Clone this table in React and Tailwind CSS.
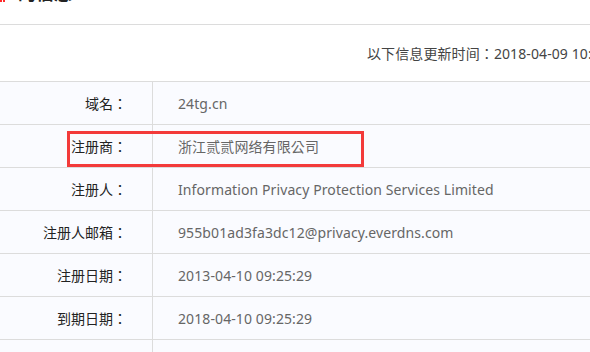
export default function App() {
  const rows = [
    ["域名：", "24tg.cn"],
    ["注册商：", "浙江贰贰网络有限公司"],
    ["注册人：", "Information Privacy Protection Services Limited"],
    ["注册人邮箱：", "955b01ad3fa3dc12@privacy.everdns.com"],
    ["注册日期：", "2013-04-10 09:25:29"],
    ["到期日期：", "2018-04-10 09:25:29"],
    ["", ""],
  ];
  const font = { fontFamily: '"Noto Sans", "Noto Sans CJK TC", sans-serif' };
  return (
    <div className="relative w-[590px] h-[352px] overflow-hidden bg-white" style={font}>
      {/* section title */}
      <div className="relative h-[25px] overflow-hidden border-b border-[#dcdcdc]">
        <div className="flex items-end mt-[-19px] text-[18px] leading-[24px] font-bold">
          <span className="w-[18px]" />
          <span className="text-[#222]">的信息</span>
        </div>
        <div className="absolute left-0 top-0 flex gap-[1px]">
          <span className="w-[2px] h-[2px] bg-[#ff2a2a]" />
          <span className="w-[2px] h-[2px] bg-[#ff2a2a]" />
        </div>
      </div>
      {/* update time */}
      <div className="h-[56px] flex items-center pl-[367px] whitespace-nowrap text-[14px] text-[#444] tracking-[0.1px]">
        以下信息更新时间：2018-04-09 10:32:18
      </div>
      {/* whois table */}
      <div className="border-t border-[#dcdcdc] bg-[#fafbff]">
        {rows.map(([k, v], i) => (
          <div key={i} className="grid grid-cols-[153px_1fr] h-[43px] border-b border-[#dcdcdc] text-[14px]">
            <div className="flex items-center justify-end pr-[25px] border-r border-[#dcdcdc] text-[#222]">{k}</div>
            <div className="flex items-center pl-[25px] text-[#666] whitespace-nowrap tracking-[0.1px]">{v}</div>
          </div>
        ))}
      </div>
      {/* highlight box */}
      <div className="absolute left-[67px] top-[131px] w-[297px] h-[36px] border-[3px] border-[#f33a3a]" />
    </div>
  );
}
